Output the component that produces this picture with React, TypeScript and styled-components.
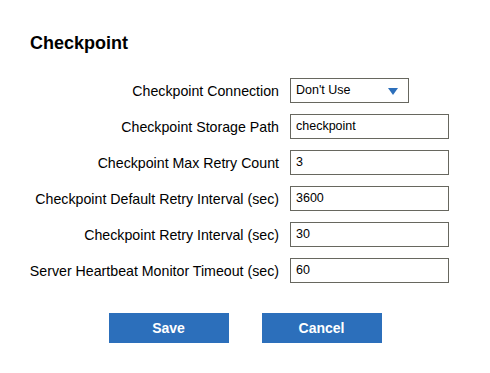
import React from 'react';
import styled, { createGlobalStyle } from 'styled-components';

const GlobalStyle = createGlobalStyle`
  body {
    margin: 0;
    background: #ffffff;
    font-family: "Liberation Sans", Arial, sans-serif;
    color: #000;
  }
`;

const Page = styled.div`
  width: 490px;
  height: 373px;
  box-sizing: border-box;
  padding: 33px 0 0;
`;

const Title = styled.h2`
  margin: 0 0 25px 30px;
  font-size: 18px;
  line-height: 20px;
  font-weight: bold;
`;

const Form = styled.div`
  display: grid;
  grid-template-columns: 279px auto;
  column-gap: 11px;
  row-gap: 11px;
  align-items: center;
`;

const Label = styled.label`
  text-align: right;
  font-size: 14.2px;
  white-space: nowrap;
`;

const Field = styled.div<{ $width: number }>`
  width: ${p => p.$width}px;
  height: 25px;
  box-sizing: border-box;
  border: 1px solid #67675f;
  display: flex;
  align-items: center;
  padding: 0 5px 1px;
  font-size: 12.5px;
  position: relative;
`;

const Arrow = styled.span`
  position: absolute;
  right: 10px;
  top: 9px;
  width: 0;
  height: 0;
  border-left: 5px solid transparent;
  border-right: 5px solid transparent;
  border-top: 7px solid #2c6fbb;
`;

const Buttons = styled.div`
  display: flex;
  justify-content: center;
  gap: 33px;
  margin-top: 30px;
`;

const Button = styled.button`
  width: 120px;
  height: 30px;
  border: none;
  background: #2c6fbb;
  color: #fff;
  font-family: "Liberation Sans", Arial, sans-serif;
  font-weight: bold;
  font-size: 14px;
  padding: 0;
`;

const rows: [string, string][] = [
  ['Checkpoint Storage Path', 'checkpoint'],
  ['Checkpoint Max Retry Count', '3'],
  ['Checkpoint Default Retry Interval (sec)', '3600'],
  ['Checkpoint Retry Interval (sec)', '30'],
  ['Server Heartbeat Monitor Timeout (sec)', '60'],
];

export default function App() {
  return (
    <Page>
      <GlobalStyle />
      <Title>Checkpoint</Title>
      <Form>
        <Label>Checkpoint Connection</Label>
        <Field $width={119}>
          Don't Use
          <Arrow />
        </Field>
        {rows.map(([label, value]) => (
          <React.Fragment key={label}>
            <Label>{label}</Label>
            <Field $width={159}>{value}</Field>
          </React.Fragment>
        ))}
      </Form>
      <Buttons>
        <Button>Save</Button>
        <Button>Cancel</Button>
      </Buttons>
    </Page>
  );
}
